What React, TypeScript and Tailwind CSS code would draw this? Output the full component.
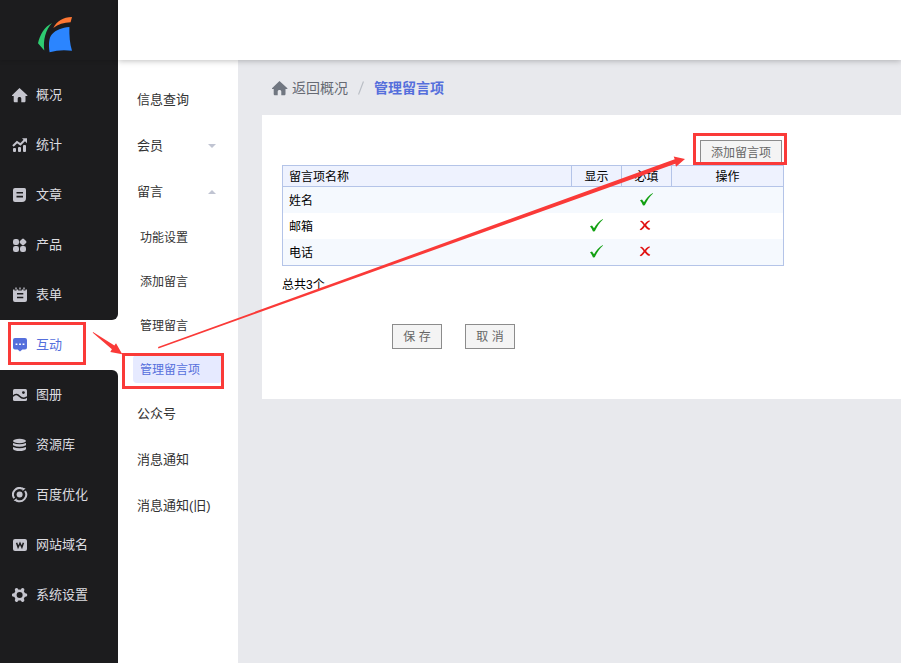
import { useState } from 'react';
import type { ReactNode } from 'react';
import { clsx } from 'clsx';

interface NavItem {
  label: string;
  icon: ReactNode;
}

interface MessageField {
  name: string;
  visible: boolean | null;
  required: boolean | null;
}

const HOUSE_PATH =
  'M7.5 1 15.4 8.2c.4.4.1.9-.4.9h-1.5V14c0 .8-.5 1.3-1.3 1.3H9.3v-3.6c0-1-.7-1.7-1.8-1.7s-1.8.7-1.8 1.7v3.6H3c-.8 0-1.3-.5-1.3-1.3V9.1H.3c-.5 0-.7-.5-.3-.9z';

function Icon({ children }: { children: ReactNode }) {
  return (
    <svg className="h-4 w-4 shrink-0" viewBox="0 0 16 16" fill="currentColor" aria-hidden="true">
      {children}
    </svg>
  );
}

const topNav: NavItem[] = [
  { label: '概况', icon: <path d={HOUSE_PATH} /> },
  {
    label: '统计',
    icon: (
      <>
        <path d="M1 9 5 5l3.4 2.4 4.6-4.6" fill="none" stroke="currentColor" strokeWidth="2" />
        <path d="M10 1.2h5v5z" />
        <rect x="1" y="11" width="3" height="4" rx="1" />
        <rect x="6" y="10" width="3" height="5" rx="1" />
        <rect x="11" y="8" width="3" height="7" rx="1" />
      </>
    ),
  },
  {
    label: '文章',
    icon: (
      <>
        <path d="M3 1h9.5Q14 1 14 2.5V11q0 4-4 4H3q-2 0-2-2V3q0-2 2-2z" />
        <path d="M4.5 5.8h6.5M4.5 9.6h6.5" stroke="#1c1c1e" strokeWidth="1.6" />
      </>
    ),
  },
  {
    label: '产品',
    icon: (
      <>
        <rect x="1" y="2" width="6" height="6" rx="2.2" />
        <rect x="8.2" y="2.2" width="5.6" height="5.6" rx="1.3" transform="rotate(45 11 5)" />
        <rect x="1" y="9" width="6" height="6" rx="2.2" />
        <rect x="8" y="9" width="6" height="6" rx="2.2" />
      </>
    ),
  },
  {
    label: '表单',
    icon: (
      <>
        <path d="M1 2.5h1.5v1h2v-1h1.7v1h3.6v-1h1.7v1h2v-1H15V13q0 2-2 2H3q-2 0-2-2z" />
        <path d="M4 .5v2M8 .5v2M12 .5v2" stroke="currentColor" strokeWidth="1.3" />
        <path d="M5 6.8h6.3M5 10.6h6.3" stroke="#1c1c1e" strokeWidth="1.5" />
      </>
    ),
  },
];

const activeNav: NavItem = {
  label: '互动',
  icon: (
    <>
      <path d="M3 1h10q2 0 2 2v7.500q0 2-2 2h-2.600L8 14.600 5.600 12.500H3q-2 0-2-2V3q0-2 2-2z" />
      <path d="M3.600 7.200h1.800M7.100 7.200h1.800M10.600 7.200h1.800" stroke="#fff" strokeWidth="1.6" />
    </>
  ),
};

const bottomNav: NavItem[] = [
  {
    label: '图册',
    icon: (
      <>
        <rect x="1" y="2" width="14" height="12" rx="1.5" />
        <path d="M1 9.200C3.500 6.400 5.800 7.400 7.500 9.200s4.500 3 7.500.6" fill="none" stroke="#1c1c1e" strokeWidth="1.6" />
        <circle cx="11.400" cy="5.600" r="1.400" fill="#1c1c1e" />
      </>
    ),
  },
  {
    label: '资源库',
    icon: (
      <>
        <ellipse cx="7.5" cy="4" rx="6.5" ry="2.2" />
        <path d="M1 6q6.500 2.600 13 0v2.200q-6.500 3-13 0z" />
        <path d="M1 9.900q6.500 2.600 13 0v2.100q-1.500 2-6.500 2T1 12z" />
      </>
    ),
  },
  {
    label: '百度优化',
    icon: (
      <>
        <circle cx="7.600" cy="7.600" r="3" />
        <path
          d="M10.800 1.900A6.500 6.500 0 0 0 2.200 11.200M4.400 13.300A6.500 6.500 0 0 0 13 4"
          fill="none"
          stroke="currentColor"
          strokeWidth="2"
        />
        <path d="M10 .4 13.600 1.600 10.600 4zM5.200 14.800 1.600 13.600 4.600 11.200z" />
      </>
    ),
  },
  {
    label: '网站域名',
    icon: (
      <>
        <rect x="1" y="2" width="14" height="12" rx="2" />
        <path d="m4.600 5.800 1.500 4.400L8 6.200l1.900 4 1.500-4.400" fill="none" stroke="#1c1c1e" strokeWidth="1.5" />
      </>
    ),
  },
  {
    label: '系统设置',
    icon: (
      <>
        <circle cx="7.600" cy="8" r="5.600" />
        <path
          d="M1.600 8h12M4.600 2.800l6 10.400M10.600 2.800l-6 10.400"
          stroke="currentColor"
          strokeWidth="3.4"
          strokeLinecap="round"
        />
        <circle cx="7.600" cy="8" r="3" fill="#1c1c1e" />
      </>
    ),
  },
];

const messageMenu = ['功能设置', '添加留言', '管理留言', '管理留言项'];

const fields: MessageField[] = [
  { name: '姓名', visible: null, required: true },
  { name: '邮箱', visible: true, required: false },
  { name: '电话', visible: true, required: false },
];

function Logo() {
  return (
    <svg className="h-[37px] w-9" viewBox="0 0 36 37" aria-hidden="true">
      <path d="M14 7C6.500 11 2 18.500 0 27.300l6.300 7.200C5 24 7.500 14 14 7z" fill="#2ecc71" />
      <path d="M15.300 12C19 5 25 1.300 34 1l-1.400 5.300C26 6.500 20 8.200 15.300 12z" fill="#ff7733" />
      <path d="M11.600 36.200C10.600 29 10.600 22 14 18.300 18 13.800 24 11.600 31.400 11c-.2 9 .4 16.500 2.600 23.800-7-1.200-15-.8-22.400 1.400z" fill="#2b85ff" />
    </svg>
  );
}

function NavLink({ item, active = false }: { item: NavItem; active?: boolean }) {
  return (
    <a
      href="#"
      className={clsx(
        'flex h-[50px] items-center gap-2 pl-3 text-[13px]',
        active ? 'bg-white text-[#556fdc]' : 'text-[#dcdce0]'
      )}
    >
      <span className={clsx('flex w-4', !active && 'text-[#c5c5ce]')}>
        <Icon>{item.icon}</Icon>
      </span>
      {item.label}
    </a>
  );
}

function Caret({ up = false }: { up?: boolean }) {
  return (
    <svg className="h-1 w-2" viewBox="0 0 8 4" fill="#c0c4d2" aria-hidden="true">
      <path d={up ? 'M0 4 4 0l4 4z' : 'M0 0h8L4 4z'} />
    </svg>
  );
}

function Mark({ value }: { value: boolean | null }) {
  if (value === null) return null;
  return value ? (
    <svg className="mx-auto h-3.5 w-3.5" viewBox="0 0 14 14" role="img" aria-label="是">
      <path d="M1 7.200 3 6.500 5 9.300C7.200 5.600 10 2.200 13.900 0L14 .5C10.500 3.700 8 7.600 5.800 12.200L4 12.600C3.300 10.600 2.300 8.800 1 7.200z" fill="#12a012" />
    </svg>
  ) : (
    <svg className="mx-auto h-3.5 w-3.5" viewBox="0 0 14 14" role="img" aria-label="否">
      <path d="M1.700 1.800C3.200 1.500 4.600 3 5.800 4.900 7.200 3 8.800 1.700 10.800 1.500L11 2.200C9.300 3.200 8.100 4.600 7.100 6.100c1.200 1.700 2.400 2.900 4.200 3.700l-1.100 1.300C8.400 10.500 7 9.300 5.800 7.600 4.700 9.200 3.500 10.500 2 11.200L.6 10.600C2.300 9.300 3.600 7.900 4.600 6.200 3.700 4.700 2.800 3.500 1.200 2.800z" fill="#e01010" />
    </svg>
  );
}

function Arrows() {
  return (
    <svg
      className="pointer-events-none absolute top-0 left-0 h-[400px] w-[700px]"
      viewBox="0 0 700 400"
      fill="#fa3a38"
      aria-hidden="true"
    >
      <path d="M93 332 114.400 345.600 116 343.200 122.300 354.200 110.300 352 111.900 349.200 92.800 332.800z" />
      <path d="M158 347 674.700 159.200 673.700 156.500 685 159 676 166.700 675.300 163.800 158.400 348.400z" />
    </svg>
  );
}

export default function App() {
  const [messageOpen, setMessageOpen] = useState(true);

  return (
    <div className="relative flex min-h-screen bg-[#e8e9ed] font-['Liberation_Sans','Noto_Sans_CJK_SC',sans-serif] text-[#333]">
      <aside className="flex w-[118px] shrink-0 flex-col bg-white">
        <div className="rounded-br-md bg-[#1c1c1e]">
          <div className="flex h-[60px] items-start pt-4 pl-[38px] shadow-[0_1px_4px_rgba(0,0,0,0.15)]">
            <Logo />
          </div>
          <nav className="pt-2.5">
            {topNav.map((item) => (
              <NavLink key={item.label} item={item} />
            ))}
          </nav>
        </div>
        <div className="relative">
          <NavLink item={activeNav} active />
          <div className="pointer-events-none absolute top-0.5 left-2 h-[43px] w-[78px] border-3 border-[#fa3a38]" />
        </div>
        <nav className="flex-1 rounded-tr-md bg-[#1c1c1e]">
          {bottomNav.map((item) => (
            <NavLink key={item.label} item={item} />
          ))}
        </nav>
      </aside>

      <div className="flex min-w-0 flex-1 flex-col">
        <header className="relative h-[60px] bg-white shadow-[0_1px_6px_rgba(0,0,0,0.25)]" />

        <div className="flex flex-1">
          <nav className="w-[120px] shrink-0 bg-white pt-[17px] text-[13px]">
            <a href="#" className="flex h-[46px] items-center pl-[19px]">
              信息查询
            </a>
            <button className="flex h-[46px] w-full items-center justify-between pr-[22px] pl-[19px]">
              会员
              <Caret />
            </button>
            <button
              onClick={() => setMessageOpen(!messageOpen)}
              className="flex h-[46px] w-full items-center justify-between pr-[22px] pl-[19px]"
            >
              留言
              <Caret up={messageOpen} />
            </button>
            {messageOpen &&
              messageMenu.map((label) => {
                const active = label === '管理留言项';
                return (
                  <div key={label} className="relative flex h-11 items-center pr-4 pl-[15px] text-xs">
                    <a
                      href="#"
                      className={clsx(
                        'flex h-7 flex-1 items-center rounded-sm pt-0.5 pl-[7px]',
                        active && 'bg-[#e6eaff] text-[#556fdc]'
                      )}
                    >
                      {label}
                    </a>
                    {active && (
                      <div className="pointer-events-none absolute top-1.5 left-1 h-9 w-[102px] border-3 border-[#fa3a38]" />
                    )}
                  </div>
                );
              })}
            {['公众号', '消息通知', '消息通知(旧)'].map((label) => (
              <a key={label} href="#" className="flex h-[46px] items-center pl-[19px]">
                {label}
              </a>
            ))}
          </nav>

          <main className="min-w-0 flex-1 pl-6">
            <div className="flex h-[55px] items-center pl-2.5 text-sm">
              <a href="#" className="flex items-center gap-1 text-[#666a73]">
                <span className="flex text-[#717781]">
                  <Icon>
                    <path d={HOUSE_PATH} />
                  </Icon>
                </span>
                返回概况
              </a>
              <svg className="mx-2.5 h-3.5 w-1.5" viewBox="0 0 6 14" stroke="#b9bdc4" strokeWidth="1.2" aria-hidden="true">
                <path d="M5.500 .5 .5 13.500" />
              </svg>
              <span className="font-bold text-[#556fdc]">管理留言项</span>
            </div>

            <section className="bg-white px-5 pt-[25px] pb-[50px] text-xs text-black">
              <div className="max-w-[502px]">
                <div className="flex justify-end pr-0.5">
                  <div className="relative">
                    <button className="block h-[25px] w-[82px] border border-b-0 border-[#8c8c8c] bg-[#f4f4f4] text-[#666]">
                      添加留言项
                    </button>
                    <div className="pointer-events-none absolute -top-[7px] -left-[7px] h-8 w-[94px] border-3 border-[#fa3a38]" />
                  </div>
                </div>

                <table className="w-full table-fixed border-separate border-spacing-0 border border-[#b4c4e8]">
                  <thead>
                    <tr className="h-[21px] bg-[#eef2fe]">
                      <th className="border-b border-[#b4c4e8] pt-0.5 pl-1.5 text-left font-normal">留言项名称</th>
                      {['显示', '必填'].map((label) => (
                        <th key={label} className="w-[50px] border-b border-l border-[#b4c4e8] pt-0.5 font-normal">
                          {label}
                        </th>
                      ))}
                      <th className="w-[112px] border-b border-l border-[#b4c4e8] pt-0.5 font-normal">操作</th>
                    </tr>
                  </thead>
                  <tbody>
                    {fields.map((field) => (
                      <tr key={field.name} className="h-[26px] odd:bg-[#f5f9fe]">
                        <td className="pt-0.5 pl-1.5">{field.name}</td>
                        <td className="p-0">
                          <Mark value={field.visible} />
                        </td>
                        <td className="p-0">
                          <Mark value={field.required} />
                        </td>
                        <td className="p-0" />
                      </tr>
                    ))}
                  </tbody>
                </table>

                <p className="flex h-[38px] items-center">总共{fields.length}个</p>

                <div className="mt-5 flex gap-[23px] pl-[110px]">
                  {['保 存', '取 消'].map((label) => (
                    <button
                      key={label}
                      className="h-[25px] w-[50px] border border-[#8c8c8c] bg-[#f4f4f4] text-xs text-[#666]"
                    >
                      {label}
                    </button>
                  ))}
                </div>
              </div>
            </section>
          </main>
        </div>
      </div>

      <Arrows />
    </div>
  );
}
